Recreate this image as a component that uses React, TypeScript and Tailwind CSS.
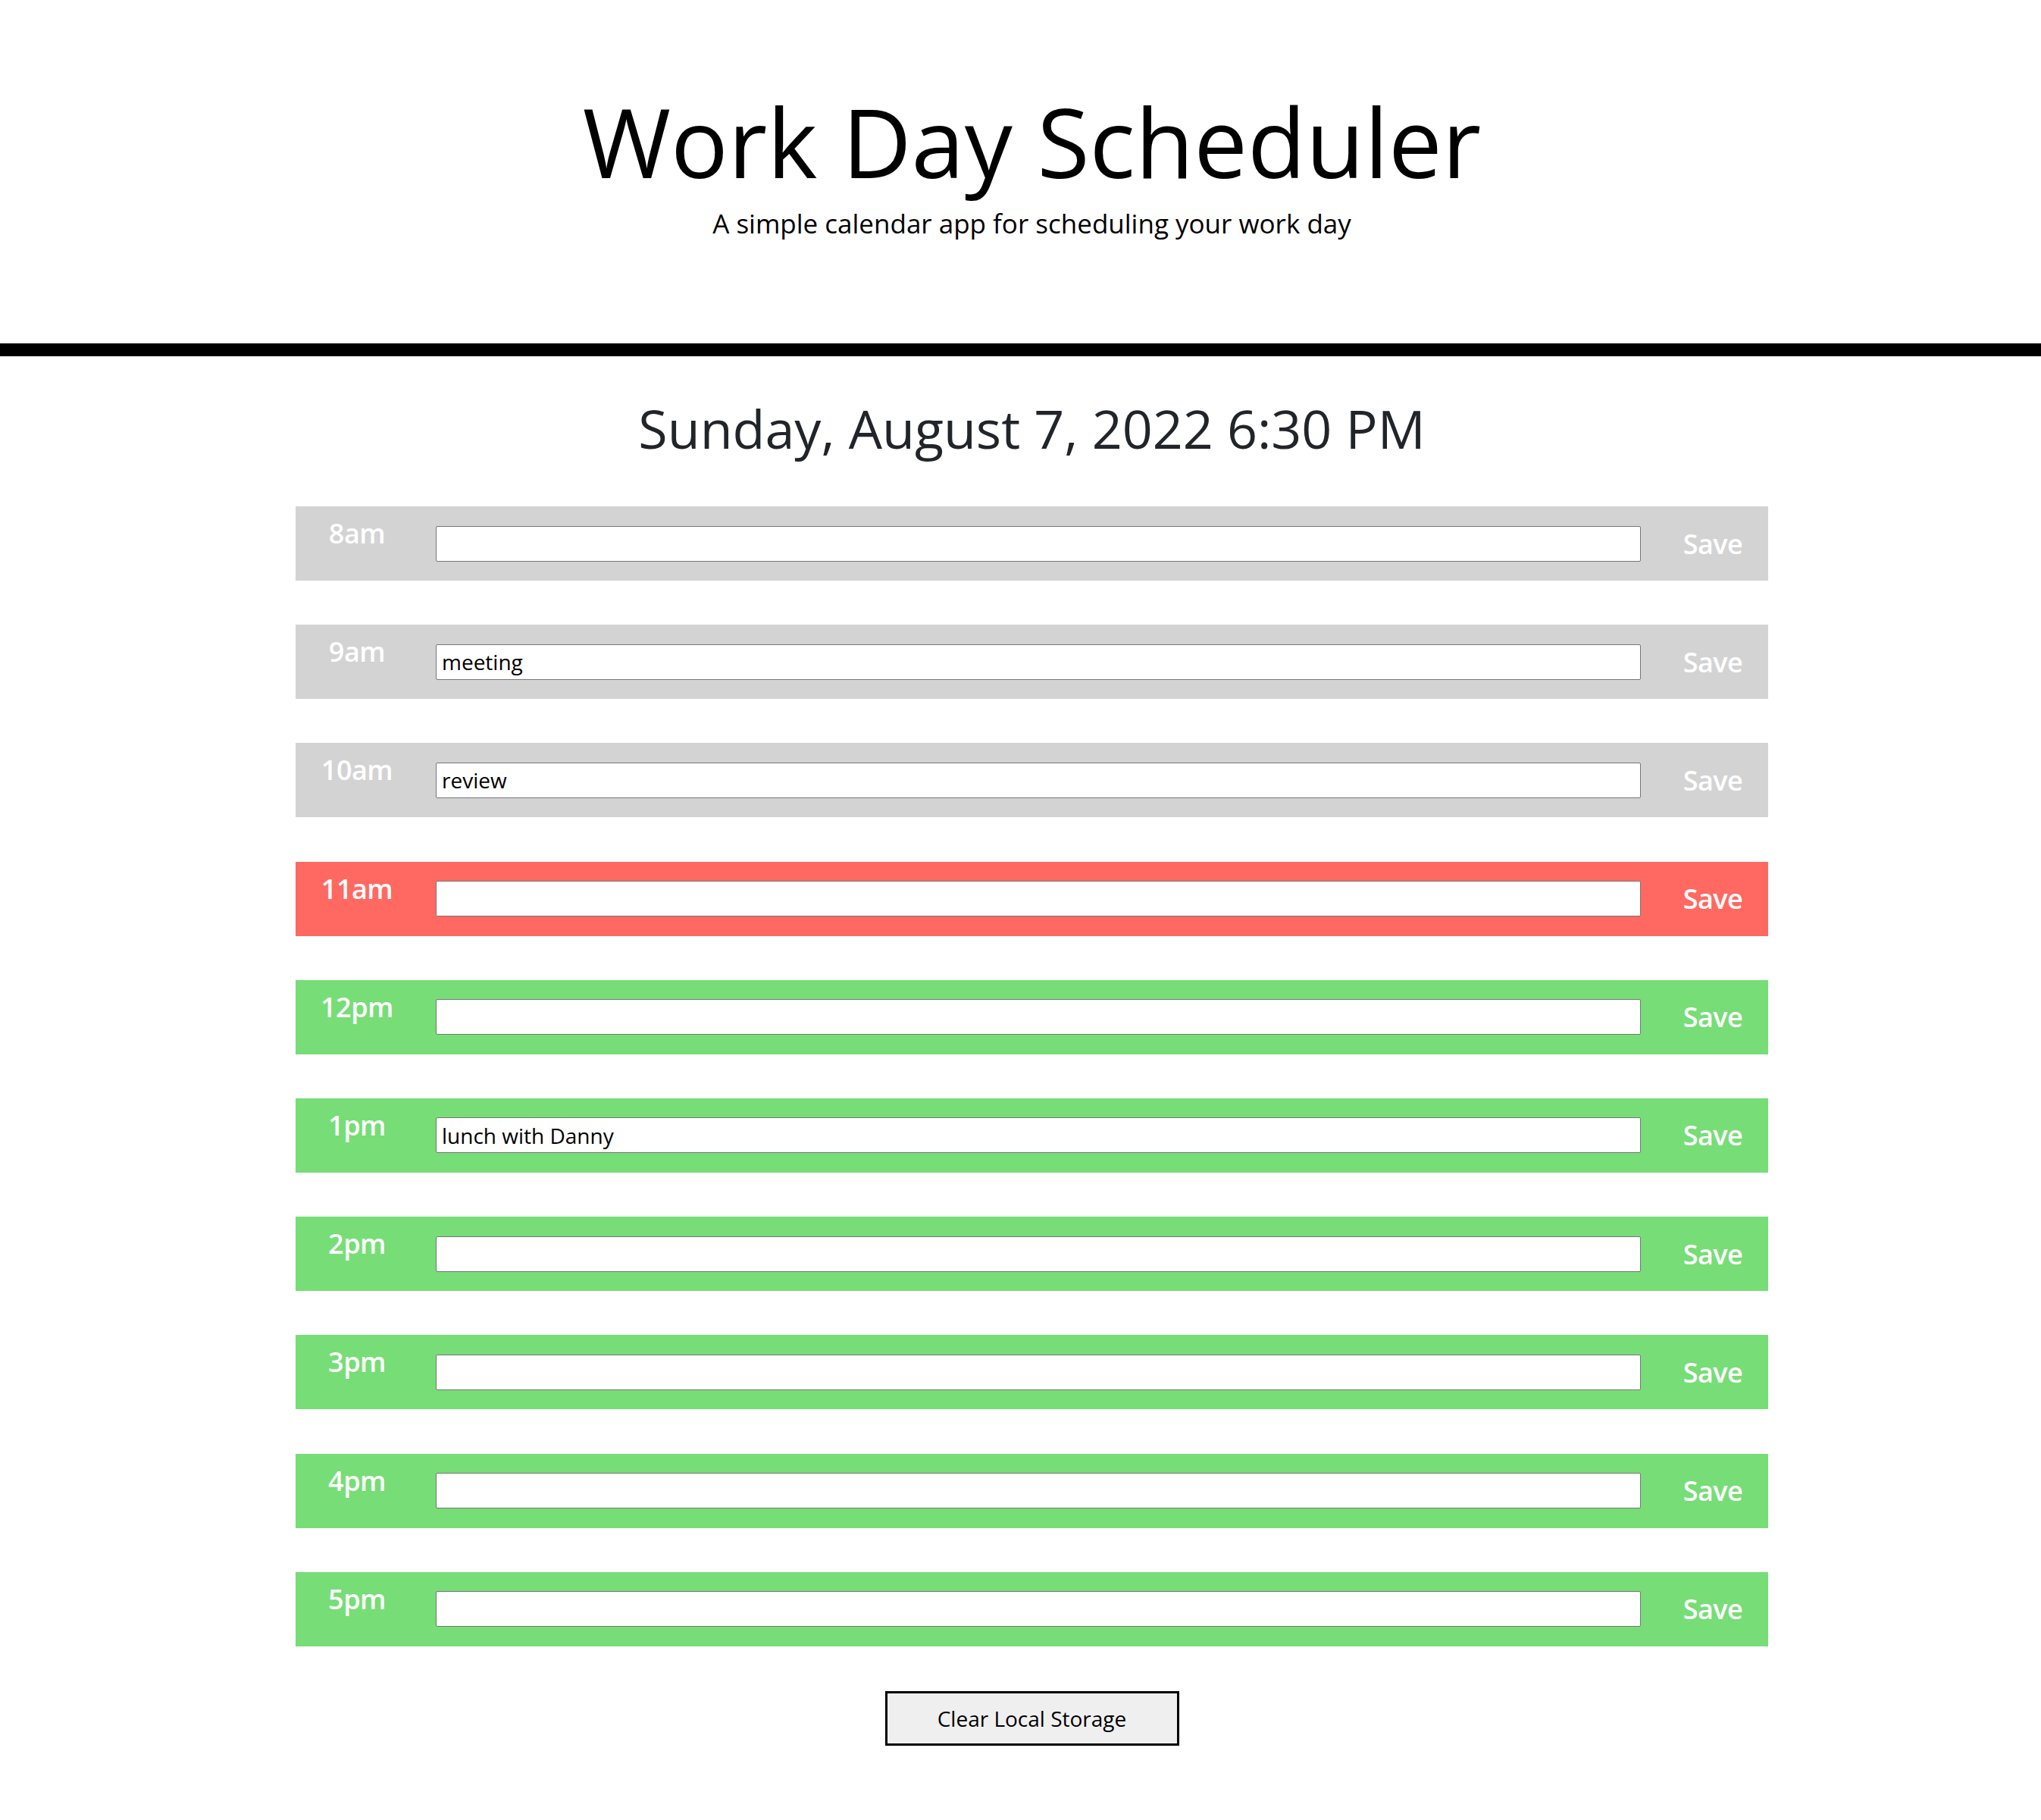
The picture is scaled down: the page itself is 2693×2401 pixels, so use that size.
import React from "react";

type Row = { hour: string; text: string; state: "past" | "present" | "future" };

const rows: Row[] = [
  { hour: "8am", text: "", state: "past" },
  { hour: "9am", text: "meeting", state: "past" },
  { hour: "10am", text: "review", state: "past" },
  { hour: "11am", text: "", state: "present" },
  { hour: "12pm", text: "", state: "future" },
  { hour: "1pm", text: "lunch with Danny", state: "future" },
  { hour: "2pm", text: "", state: "future" },
  { hour: "3pm", text: "", state: "future" },
  { hour: "4pm", text: "", state: "future" },
  { hour: "5pm", text: "", state: "future" },
];

const bgFor = (s: Row["state"]) =>
  s === "past" ? "bg-[#d3d3d3]" : s === "present" ? "bg-[#ff6961]" : "bg-[#77dd77]";

function TimeRow({ row }: { row: Row }) {
  return (
    <div className={`flex h-[98px] text-white ${bgFor(row.state)}`}>
      <div className="w-[162px] shrink-0 pt-[11px] text-center text-[36px] font-semibold leading-[normal] tracking-[-0.5px]">
        {row.hour}
      </div>
      <div className="flex flex-1 items-center pl-[23px] pr-[6px]">
        <input
          className="h-[47px] w-full rounded-[2px] border border-[#767676] bg-white px-[7px] text-[28px] leading-[normal] text-black outline-none"
          defaultValue={row.text}
        />
      </div>
      <button className="flex w-[162px] shrink-0 items-center justify-center pl-[16px] text-[36px] font-semibold leading-[normal] tracking-[-0.5px] text-white">
        Save
      </button>
    </div>
  );
}

export default function App() {
  return (
    <div className="min-h-screen bg-white font-['Open_Sans',sans-serif] text-black">
      <header className="pl-[30px] pt-[100px] pb-[135px] text-center">
        <h1 className="text-[126px] font-normal leading-[normal] text-black">Work Day Scheduler</h1>
        <p className="-mt-px text-[35px] leading-[normal] text-black">
          A simple calendar app for scheduling your work day
        </p>
      </header>
      <div className="h-[17px] bg-black" />
      <main className="flex flex-col items-center pl-[30px] pt-[47px] pb-[98px]">
        <p className="text-[70px] leading-[normal] text-[#212529]">Sunday, August 7, 2022 6:30 PM</p>
        <div className="mt-[55px] flex w-[1943px] flex-col gap-[58.2px]">
          {rows.map((r) => (
            <TimeRow key={r.hour} row={r} />
          ))}
        </div>
        <button className="mt-[59px] h-[72px] w-[388px] border-[3px] border-black bg-[#efefef] text-[28px] leading-[normal] text-black">
          Clear Local Storage
        </button>
      </main>
    </div>
  );
}
